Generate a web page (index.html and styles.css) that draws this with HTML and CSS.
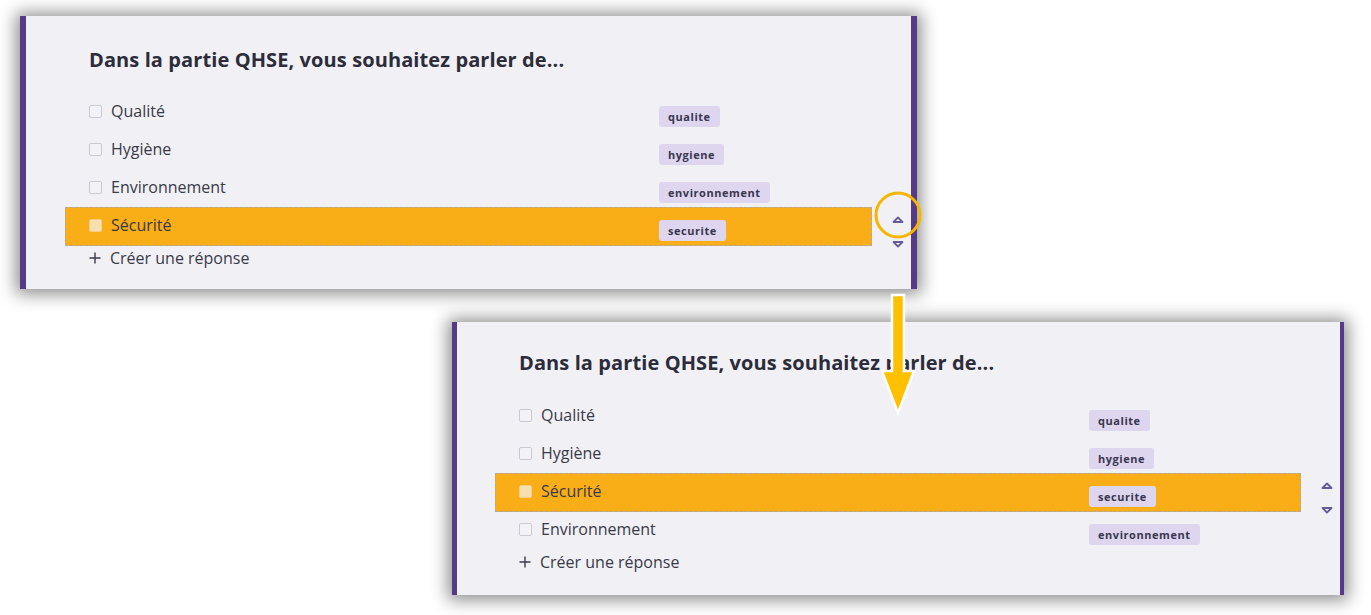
FILE: index.html
```html
<!DOCTYPE html>
<html lang="fr">
<head>
<meta charset="utf-8">
<title>QHSE</title>
<link rel="stylesheet" href="styles.css">
</head>
<body>
<div class="stage">
  <section class="card card-a">
    <h2 class="title">Dans la partie QHSE, vous souhaitez parler de...</h2>
    <div class="list">
      <div class="row"><div class="opt"><span class="box"></span><span class="label">Qualité</span><span class="tag">qualite</span></div></div>
      <div class="row"><div class="opt"><span class="box"></span><span class="label">Hygiène</span><span class="tag">hygiene</span></div></div>
      <div class="row"><div class="opt"><span class="box"></span><span class="label">Environnement</span><span class="tag">environnement</span></div></div>
      <div class="row"><div class="opt active"><span class="box"></span><span class="label">Sécurité</span><span class="tag">securite</span></div>
        <div class="ctrl">
          <svg class="tri" width="12" height="9" viewBox="0 0 12 9"><polygon points="1.5,7 6,2.5 10.5,7" fill="none" stroke="#665c9a" stroke-width="1.8" stroke-linejoin="round"/></svg>
          <svg class="tri" width="12" height="9" viewBox="0 0 12 9"><polygon points="1.5,2 6,6.5 10.5,2" fill="none" stroke="#665c9a" stroke-width="1.8" stroke-linejoin="round"/></svg>
        </div>
      </div>
      <div class="create"><svg width="12" height="12" viewBox="0 0 12 12"><path d="M6 0.5V11.5M0.5 6H11.5" stroke="#3a3a48" stroke-width="1.4"/></svg><span>Créer une réponse</span></div>
    </div>
  </section>

  <section class="card card-b">
    <h2 class="title">Dans la partie QHSE, vous souhaitez parler de...</h2>
    <div class="list">
      <div class="row"><div class="opt"><span class="box"></span><span class="label">Qualité</span><span class="tag">qualite</span></div></div>
      <div class="row"><div class="opt"><span class="box"></span><span class="label">Hygiène</span><span class="tag">hygiene</span></div></div>
      <div class="row"><div class="opt active"><span class="box"></span><span class="label">Sécurité</span><span class="tag">securite</span></div>
        <div class="ctrl">
          <svg class="tri" width="12" height="9" viewBox="0 0 12 9"><polygon points="1.5,7 6,2.5 10.5,7" fill="none" stroke="#665c9a" stroke-width="1.8" stroke-linejoin="round"/></svg>
          <svg class="tri" width="12" height="9" viewBox="0 0 12 9"><polygon points="1.5,2 6,6.5 10.5,2" fill="none" stroke="#665c9a" stroke-width="1.8" stroke-linejoin="round"/></svg>
        </div>
      </div>
      <div class="row"><div class="opt"><span class="box"></span><span class="label">Environnement</span><span class="tag">environnement</span></div></div>
      <div class="create"><svg width="12" height="12" viewBox="0 0 12 12"><path d="M6 0.5V11.5M0.5 6H11.5" stroke="#3a3a48" stroke-width="1.4"/></svg><span>Créer une réponse</span></div>
    </div>
  </section>

  <svg class="ring" width="52" height="52" viewBox="0 0 52 52"><circle cx="26" cy="26" r="22" fill="none" stroke="#f6b600" stroke-width="3"/></svg>
  <svg class="bigarrow" width="40" height="126" viewBox="0 0 40 126"><polygon points="14,3 26,3 26,79 36,79 20,121 4,79 14,79" fill="#ffc000" stroke="#ffffff" stroke-width="2.5" stroke-linejoin="miter"/></svg>
</div>
</body>
</html>
```
FILE: styles.css
```css
* { box-sizing: border-box; }
html, body { margin: 0; padding: 0; background: #ffffff; }
body { font-family: "Open Sans", "Noto Sans", sans-serif; color: #3a3a48; }
.stage { position: relative; width: 1371px; height: 615px; overflow: hidden; padding-top: 16px; }

.card {
  background: #f0f0f5;
  border-left: 6px solid #553a85;
  border-right: 6px solid #553a85;
  box-shadow: 0 1px 16px 4px rgba(0, 0, 0, 0.45);
  height: 273px;
  padding-top: 30px;
}
.card-a { width: 897px; margin-left: 20px; }
.card-b { width: 892px; margin-left: 452px; margin-top: 33px; border-left-width: 5px; border-right-width: 4px; padding-top: 27px; }

.title {
  margin: 0 0 19px 63px;
  font-size: 20px;
  line-height: 28px;
  font-weight: 700;
  letter-spacing: 0.1px;
  color: #2c2c3a;
}
.card-b .title { margin-left: 62px; margin-bottom: 20px; }

.list { margin-left: 39px; }
.card-b .list { margin-left: 38px; }

.row { display: flex; align-items: flex-start; height: 38px; }
.opt {
  width: 807px;
  height: 38px;
  border: 1px dashed transparent;
  padding-left: 23px;
  display: grid;
  grid-template-columns: 22px 548px auto;
  align-items: start;
}
.opt.active {
  height: 39px;
  background: #f9ad16;
  border-color: #a9a8b3;
}
.box {
  width: 13px;
  height: 13px;
  margin-top: 11px;
  border: 1px solid #c9c9d3;
  border-radius: 2px;
  background: #f3f3f7;
}
.active .box { background: #f7dfb0; border-color: #f0cf8e; }
.label {
  padding-top: 6px;
  font-size: 16px;
  line-height: 22px;
  color: #3a3a48;
}
.tag {
  justify-self: start;
  margin-top: 12px;
  height: 21px;
  padding: 0 9px;
  background: #ddd6ee;
  border-radius: 3px;
  font-size: 11px;
  line-height: 21px;
  font-weight: 700;
  letter-spacing: 0.55px;
  color: #3a3650;
}
.ctrl {
  width: 26px;
  margin-left: 13px;
  padding-top: 8px;
  display: flex;
  flex-direction: column;
  align-items: center;
  gap: 16px;
}
.tri { display: block; }

.create {
  display: flex;
  align-items: center;
  height: 26px;
  padding-left: 24px;
  font-size: 16px;
  color: #3a3a48;
}
.create svg { margin-right: 9px; }

.ring { position: absolute; left: 872px; top: 189px; }
.bigarrow { position: absolute; left: 878px; top: 292px; }
```
